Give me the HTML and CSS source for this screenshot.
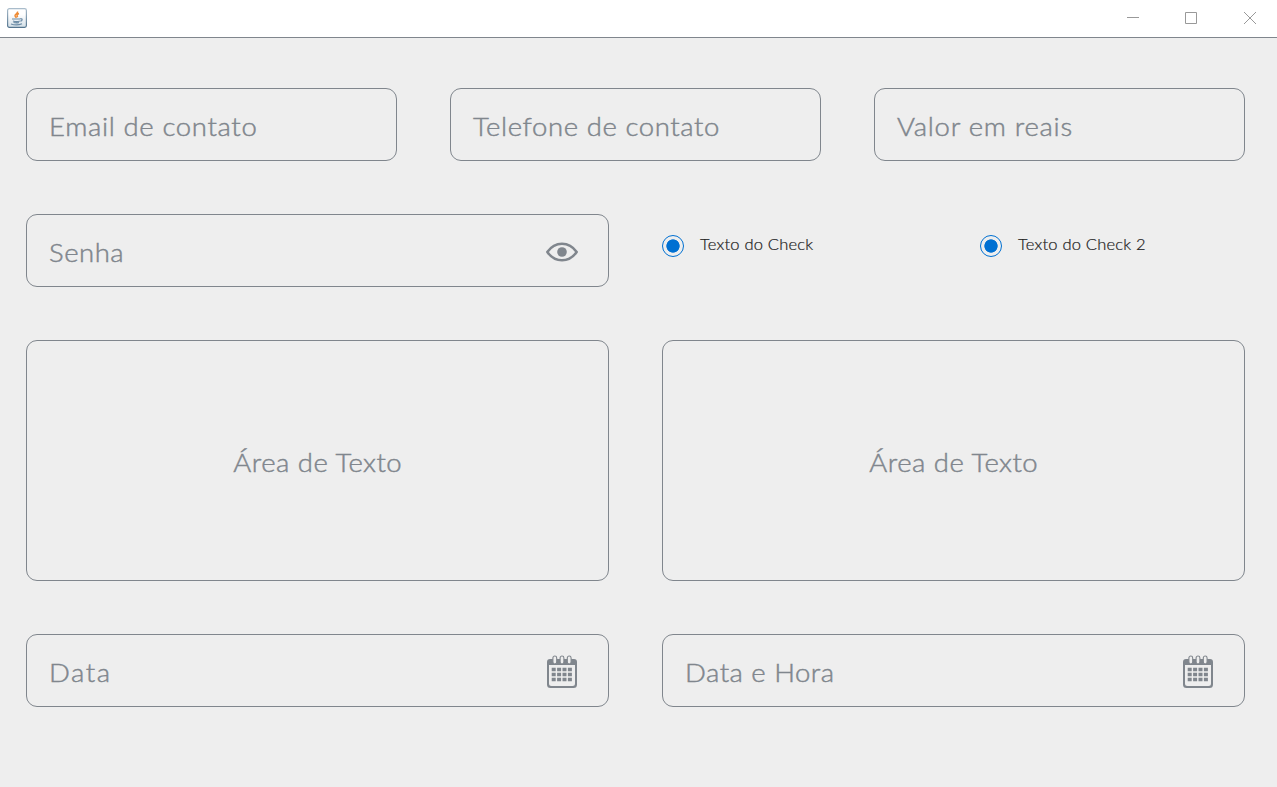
FILE: index.html
```html
<!DOCTYPE html>
<html lang="pt-BR">
<head>
<meta charset="utf-8">
<title>Formulário</title>
<link rel="stylesheet" href="styles.css">
</head>
<body>
<svg class="defs" aria-hidden="true">
  <symbol id="calendar" viewBox="0 0 30 33">
    <path fill="currentColor" fill-rule="evenodd" d="M3 4h24a3 3 0 0 1 3 3v22.500a3.500 3.500 0 0 1-3.500 3.500h-23a3.500 3.500 0 0 1-3.500-3.500V7a3 3 0 0 1 3-3zM2 10v18.500a2.500 2.500 0 0 0 2.500 2.500h21a2.500 2.500 0 0 0 2.500-2.500V10z"/>
    <g fill="#eee" stroke="currentColor" stroke-width="1.100">
      <rect x="5.900" y="1" width="3.800" height="8" rx="1.900"/>
      <rect x="13.100" y="1" width="3.800" height="8" rx="1.900"/>
      <rect x="20.300" y="1" width="3.800" height="8" rx="1.900"/>
    </g>
    <path stroke="currentColor" stroke-width="3.600" stroke-dasharray="4 1.400" d="M4.700 14.500h20.300M4.700 19.500h20.300M4.700 24.500h20.300"/>
  </symbol>
</svg>
<header class="titlebar">
  <svg class="app-icon" viewBox="0 0 20 20">
    <defs><linearGradient id="frame" x1="0" y1="0" x2="0" y2="1"><stop stop-color="#a9bccb"/><stop offset="1" stop-color="#55758f"/></linearGradient>
    <linearGradient id="face" x1="0" y1="0" x2="0" y2="1"><stop offset=".3" stop-color="#fff"/><stop offset="1" stop-color="#d3dfe7"/></linearGradient></defs>
    <rect x=".6" y=".6" width="18.800" height="18.800" rx="1.800" fill="url(#face)" stroke="url(#frame)" stroke-width="1.200"/>
    <path d="M10.500 3.500c1 2-3 2.500-2.500 4.300.2.800 1 1.300 1.500 2M12 5.500c-2 .8-2.500 2-1.300 3.600" fill="none" stroke="#ee8b35" stroke-width="1.500"/>
    <path d="M5 11h8M6 13c2 .8 5 .8 6.800 0M6.500 14.500c2 .6 4 .6 5.500 0M4 16c3 1 8 1 11-.3M13 10.800c3-.5 2.500 2 .3 2.400" fill="none" stroke="#6c8ca6" stroke-width="1.200"/>
  </svg>
  <div class="window-buttons">
    <svg viewBox="0 0 12 12"><path d="M0 5.500h12"/></svg>
    <svg viewBox="0 0 12 12"><path d="M.5.500h11v11H.5z"/></svg>
    <svg viewBox="0 0 12 12"><path d="M0 0l12 12M12 0L0 12"/></svg>
  </div>
</header>
<main class="form">
  <div class="field third"><span class="label email">Email de contato</span></div>
  <div class="field third"><span class="label phone">Telefone de contato</span></div>
  <div class="field third"><span class="label amount">Valor em reais</span></div>
  <div class="field half"><span class="label password">Senha</span>
    <svg class="eye" viewBox="0 0 32 20"><path d="M1.300 10C9-1 23-1 30.700 10 23 21 9 21 1.300 10z" fill="none" stroke="currentColor" stroke-width="2.500" stroke-linejoin="round"/><circle cx="16" cy="10" r="4.800" fill="currentColor"/></svg>
  </div>
  <div class="check"><span class="radio"></span><span class="check-text">Texto do Check</span></div>
  <div class="check"><span class="radio"></span><span class="check-text">Texto do Check 2</span></div>
  <div class="field area half"><span class="label area-text">Área de Texto</span></div>
  <div class="field area half"><span class="label area-text">Área de Texto</span></div>
  <div class="field half"><span class="label date">Data</span><svg class="calendar"><use href="#calendar"/></svg></div>
  <div class="field half"><span class="label datetime">Data e Hora</span><svg class="calendar"><use href="#calendar"/></svg></div>
</main>
</body>
</html>
```
FILE: styles.css
```css
* { box-sizing: border-box; }
body {
  margin: 0;
  height: 787px;
  overflow: hidden;
  background: #eee;
  color: #80868d;
  font-family: "Century Gothic", "Lato Light", Lato, sans-serif;
  font-weight: 300;
}
.defs { display: none; }
.titlebar {
  display: flex;
  justify-content: space-between;
  height: 38px;
  padding: 8px 21px 0 7px;
  background: #fff;
  border-bottom: 1px solid #80868d;
}
.app-icon { width: 20px; height: 20px; }
.window-buttons { display: flex; gap: 46px; padding-top: 4px; }
.window-buttons svg {
  width: 12px;
  height: 12px;
  fill: none;
  stroke: #999;
  stroke-width: 1;
}
.window-buttons svg:last-child { margin-left: 1px; }
.form {
  display: grid;
  grid-template-columns: repeat(12, 53px);
  grid-template-rows: 73px 73px 241px 73px;
  gap: 53px;
  padding: 50px 26px;
}
.field {
  display: flex;
  align-items: center;
  justify-content: space-between;
  padding: 2px 31px 0 22px;
  border: 1px solid #80868d;
  border-radius: 11px;
}
.third { grid-column: span 4; }
.half { grid-column: span 6; }
.area { justify-content: center; padding: 2px 0 0; }
.label {
  font-size: 25px;
  line-height: 32px;
  white-space: nowrap;
  transform: scaleX(1.1);
  transform-origin: left center;
  -webkit-text-stroke: .45px currentColor;
}
.email { letter-spacing: .6px; }
.phone { letter-spacing: .550px; }
.amount { letter-spacing: .650px; }
.password { letter-spacing: .5px; }
.area-text { letter-spacing: .450px; transform-origin: center; }
.date { letter-spacing: 1.400px; }
.datetime { letter-spacing: .450px; }
.eye { width: 32px; height: 20px; margin-right: -1px; }
.calendar { width: 30px; height: 33px; }
.check {
  grid-column: span 3;
  display: flex;
  align-items: flex-start;
  padding-top: 21px;
  color: #222;
}
.radio {
  width: 22px;
  height: 22px;
  margin-right: 16px;
  border: 1px solid #0070d2;
  border-radius: 50%;
  background: radial-gradient(circle, #0070d2 6.300px, transparent 7px);
}
.check-text {
  margin-top: -1px;
  font-size: 15px;
  line-height: 20px;
  letter-spacing: .2px;
  white-space: nowrap;
  transform: scaleX(1.1);
  transform-origin: left center;
  -webkit-text-stroke: .2px currentColor;
}
```
